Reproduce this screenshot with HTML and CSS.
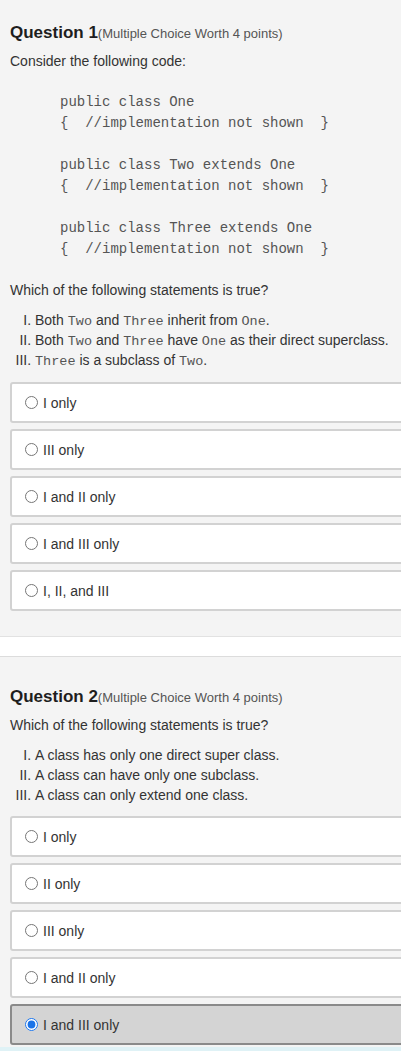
FILE: index.html
```html
<!DOCTYPE html>
<html>
<head>
<meta charset="utf-8">
<link rel="stylesheet" href="styles.css">
</head>
<body>
<div class="page">
  <section class="question first">
    <h2 class="q-title">Question 1<span class="q-meta">(Multiple Choice Worth 4 points)</span></h2>
    <p class="q-text">Consider the following code:</p>
<pre class="code">public class One
{  //implementation not shown  }

public class Two extends One
{  //implementation not shown  }

public class Three extends One
{  //implementation not shown  }</pre>
    <p class="q-text">Which of the following statements is true?</p>
    <ol class="roman">
      <li>Both <code>Two</code> and <code>Three</code> inherit from <code>One</code>.</li>
      <li>Both <code>Two</code> and <code>Three</code> have <code>One</code> as their direct superclass.</li>
      <li><code>Three</code> is a subclass of <code>Two</code>.</li>
    </ol>
    <div class="options">
      <label class="option"><input type="radio" name="q1"><span>I only</span></label>
      <label class="option"><input type="radio" name="q1"><span>III only</span></label>
      <label class="option"><input type="radio" name="q1"><span>I and II only</span></label>
      <label class="option"><input type="radio" name="q1"><span>I and III only</span></label>
      <label class="option"><input type="radio" name="q1"><span>I, II, and III</span></label>
    </div>
  </section>
  <div class="separator"></div>
  <section class="question last">
    <h2 class="q-title">Question 2<span class="q-meta">(Multiple Choice Worth 4 points)</span></h2>
    <p class="q-text">Which of the following statements is true?</p>
    <ol class="roman">
      <li>A class has only one direct super class.</li>
      <li>A class can have only one subclass.</li>
      <li>A class can only extend one class.</li>
    </ol>
    <div class="options">
      <label class="option"><input type="radio" name="q2"><span>I only</span></label>
      <label class="option"><input type="radio" name="q2"><span>II only</span></label>
      <label class="option"><input type="radio" name="q2"><span>III only</span></label>
      <label class="option"><input type="radio" name="q2"><span>I and II only</span></label>
      <label class="option selected"><input type="radio" name="q2" checked><span>I and III only</span></label>
    </div>
  </section>
  <div class="footer-strip"></div>
</div>
</body>
</html>
```
FILE: styles.css
```css
html, body {
  margin: 0;
  padding: 0;
  overflow: hidden;
  background: #f4f4f4;
}
body {
  font-family: "Liberation Sans", Arial, sans-serif;
  font-size: 14px;
  color: #333;
}
.page {
  width: 401px;
  height: 1051px;
  overflow: hidden;
}
.question {
  padding: 29px 0 25px 10px;
  background: #f4f4f4;
}
.question.first {
  padding-top: 22px;
}
.question.last {
  padding-bottom: 2px;
}
.q-title {
  margin: 0;
  font-size: 17px;
  line-height: 22px;
  font-weight: bold;
  color: #1e1e1e;
}
.q-meta {
  font-size: 13px;
  font-weight: normal;
  color: #555;
}
.q-text {
  margin: 6px 0 0;
  line-height: 20px;
}
.code {
  margin: 21px 0 20px;
  padding-left: 50px;
  font-family: "Liberation Mono", "Courier New", monospace;
  font-size: 14px;
  line-height: 21px;
  color: #555;
}
.roman {
  list-style-type: upper-roman;
  margin: 10px 0 0;
  padding-left: 25px;
  line-height: 20px;
}
.roman code {
  font-family: "Liberation Mono", "Courier New", monospace;
  font-size: 13.5px;
  line-height: 1;
  color: #555;
}
.options {
  display: flex;
  flex-direction: column;
  gap: 6px;
  margin-top: 12px;
  margin-right: -30px;
}
.last .options {
  margin-top: 11px;
}
.option {
  display: flex;
  align-items: center;
  height: 37px;
  padding-left: 13px;
  background: #fff;
  border: 2px solid #d2d2d2;
  border-radius: 3px;
  color: #333;
}
.option input {
  margin: 0 5px 0 0;
  width: 13px;
  height: 13px;
  accent-color: #1a73e8;
}
.option.selected {
  background: #d4d4d4;
  border-color: #8a8a8a;
}
.separator {
  height: 19px;
  background: #fff;
  border-top: 1px solid #e2e2e2;
  border-bottom: 1px solid #dcdcdc;
}
.footer-strip {
  height: 4px;
  background: #dff2f6;
}
```
